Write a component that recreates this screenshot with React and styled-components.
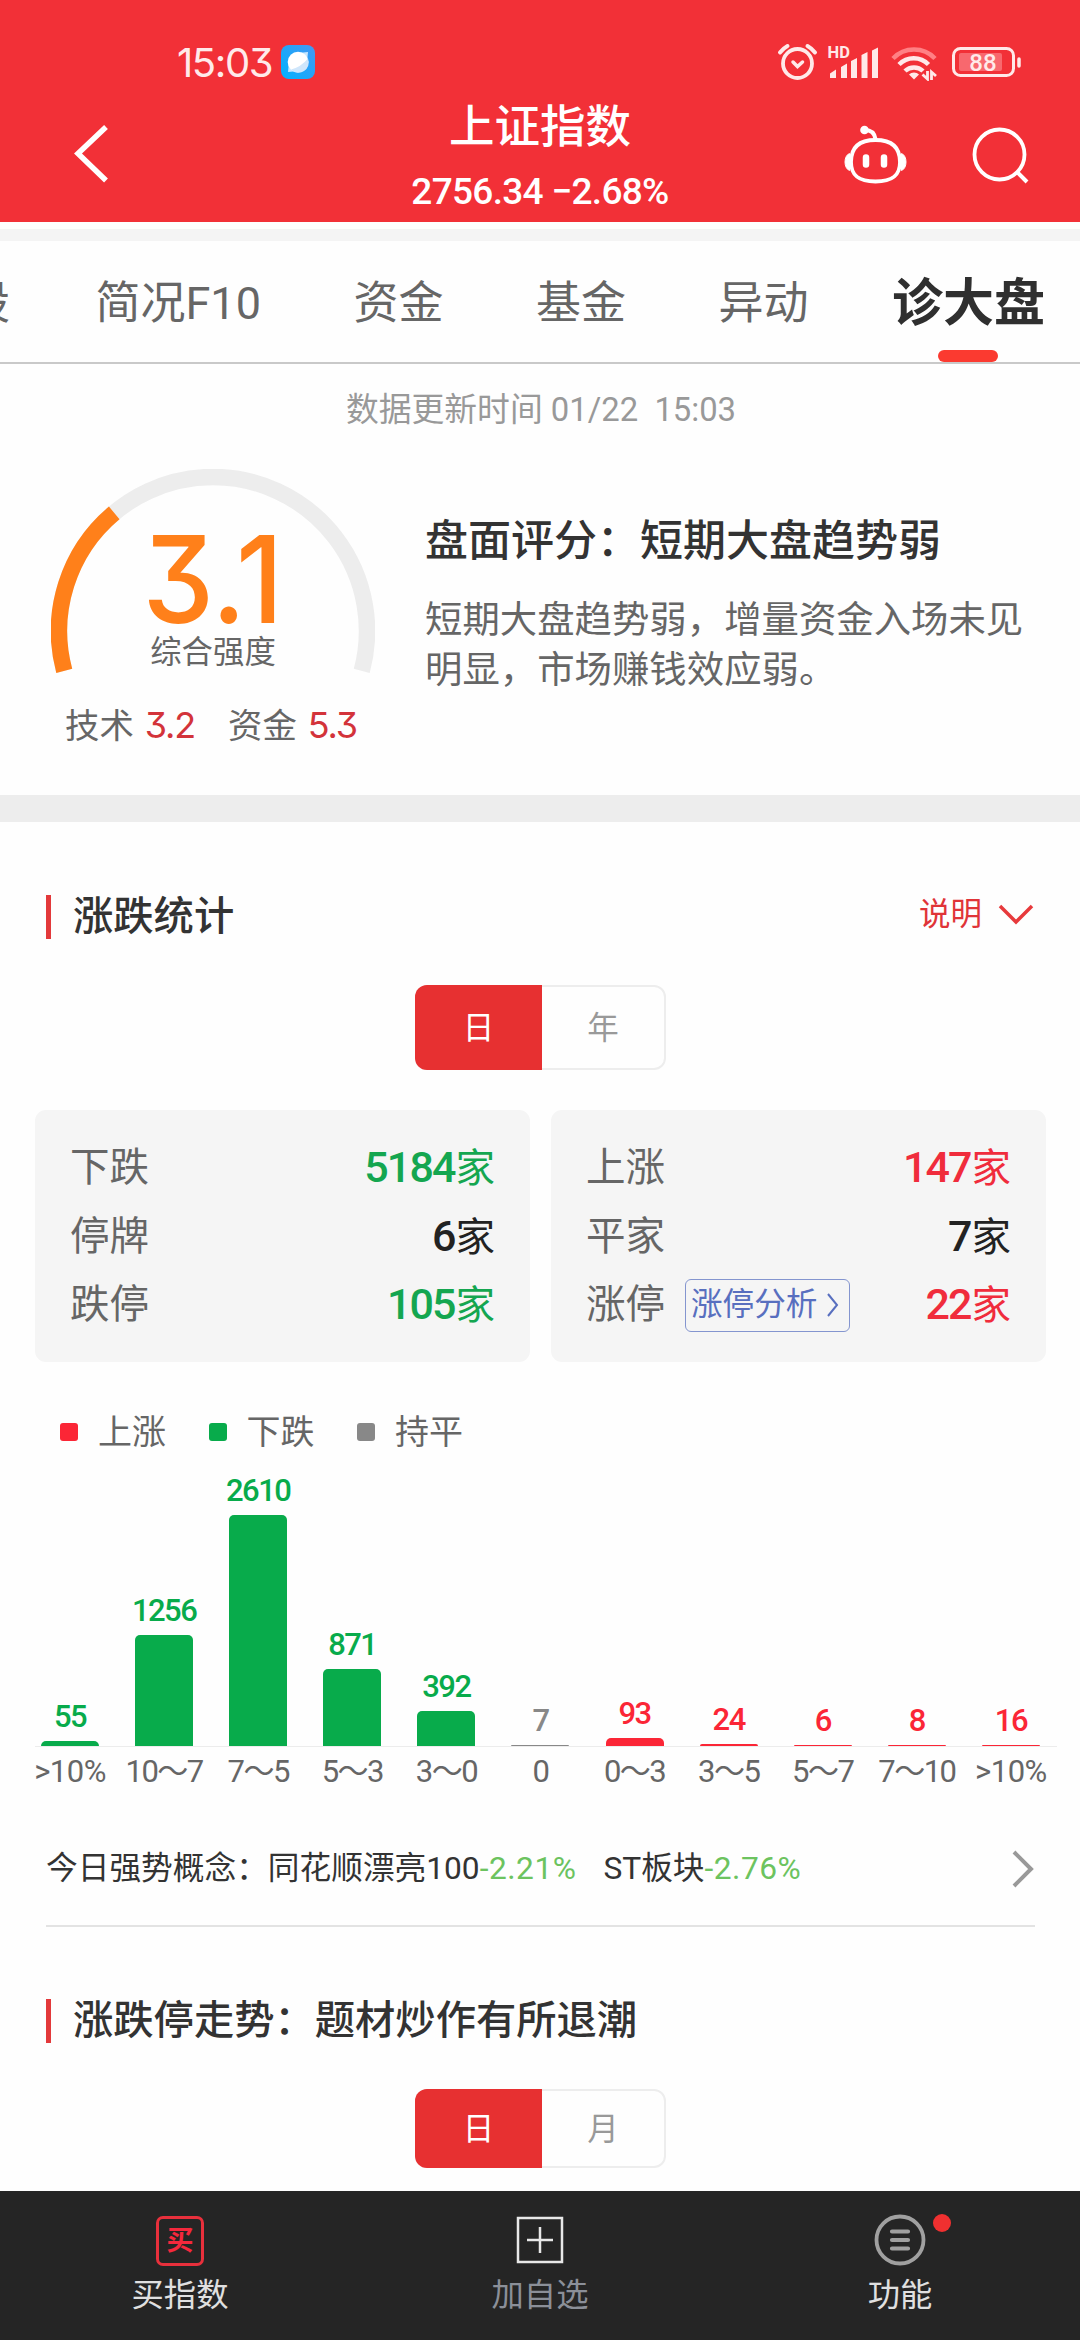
import React from "react";
import styled, { createGlobalStyle } from "styled-components";

const GlobalStyle = createGlobalStyle`
  * {
    box-sizing: border-box;
  }
  body {
    margin: 0;
    background: #fefefe;
    font-family: Roboto, "Noto Sans CJK SC", sans-serif;
    color: #333;
  }
`;

const Page = styled.div`
  width: 1080px;
  height: 2340px;
  display: flex;
  flex-direction: column;
  overflow: hidden;
  white-space: nowrap;
`;

/* ---------- header ---------- */

const Header = styled.header`
  height: 222px;
  flex: none;
  background: #f23037;
  color: #fff;
`;

const StatusBar = styled.div`
  height: 90px;
  padding: 34px 59px 0 177px;
  display: flex;
  justify-content: space-between;
`;

const StatusGroup = styled.div`
  height: 56px;
  display: flex;
  align-items: center;
`;

const Clock = styled.span`
  width: 104px;
  font-family: Inter, sans-serif;
  font-feature-settings: "cv09";
  font-size: 40px;
  line-height: 57px;
  letter-spacing: -1.4px;
  color: #ffeaea;
`;

const NavBar = styled.div`
  height: 132px;
  display: grid;
  grid-template-columns: 400px 280px 400px;
`;

const BackButton = styled.div`
  padding: 32px 0 0 72px;
`;

const Heading = styled.div`
  display: flex;
  flex-direction: column;
  align-items: center;
`;

const Title = styled.h1`
  margin: 10px 0 0;
  font-size: 45.5px;
  line-height: 55px;
  font-weight: 500;
`;

const Quote = styled.div`
  margin-top: 17px;
  font-size: 37px;
  line-height: 40px;
  font-weight: 500;
  letter-spacing: -0.7px;
`;

const NavActions = styled.div`
  display: flex;
  justify-content: flex-end;
  align-items: flex-start;
  padding: 33px 49px 0 0;
  gap: 62px;
`;

/* ---------- tabs ---------- */

const Strip = styled.div`
  height: 12px;
  margin-top: 7px;
  flex: none;
  background: #f4f4f4;
`;

const Tabs = styled.nav`
  height: 123px;
  flex: none;
  display: flex;
  justify-content: flex-end;
  gap: 92.5px;
  padding-right: 35px;
  border-bottom: 2px solid #c9c9c9;
`;

const Tab = styled.div`
  flex: none;
  height: 121px;
  margin-left: ${p => (p.$active ? -9 : 0)}px;
  display: flex;
  flex-direction: column;
  align-items: center;
  justify-content: space-between;
  font-size: ${p => (p.$active ? 51 : 45)}px;
  font-weight: ${p => (p.$active ? 700 : 400)};
  line-height: 126px;
  color: ${p => (p.$active ? "#2f2f2f" : "#666")};

  &:first-child {
    margin-right: -7px;
  }
`;

const Underline = styled.i`
  width: 60px;
  height: 12px;
  flex: none;
  margin-top: -17px;
  border-radius: 6px;
  background: #fb3a30;
`;

/* ---------- score ---------- */

const Updated = styled.div`
  height: 92px;
  flex: none;
  padding-left: 2px;
  text-align: center;
  font-size: 32.8px;
  line-height: 93px;
  white-space: pre;
  color: #999;
`;

const Score = styled.section`
  height: 339px;
  flex: none;
  display: flex;
`;

const ScoreLeft = styled.div`
  width: 425px;
  padding-top: 13px;
`;

const GaugeBox = styled.div`
  position: relative;
  width: 324px;
  height: 207px;
  margin-left: 51px;
`;

const GaugeText = styled.div`
  position: absolute;
  inset: 55px 0 0;
  display: flex;
  flex-direction: column;
  align-items: center;
`;

const GaugeValue = styled.div`
  height: 110px;
  font-family: Inter, sans-serif;
  font-feature-settings: "cv09";
  font-size: 121px;
  line-height: 110px;
  font-weight: 500;
  color: #ff801a;
  transform: scaleX(0.94);
`;

const GaugeLabel = styled.div`
  font-size: 31.4px;
  line-height: 38px;
  color: #666;
`;

const SubScores = styled.div`
  display: flex;
  margin-top: 30px;
  padding-left: 65px;
  font-size: 34.4px;
  line-height: 40px;
  color: #666;
`;

const SubScore = styled.div`
  width: 163px;
  display: flex;
  gap: 11px;

  b {
    font-family: Inter, sans-serif;
    font-feature-settings: "cv09";
    font-weight: 400;
    font-size: 36px;
    line-height: 39px;
    letter-spacing: -1.2px;
    color: #d3333a;
  }
`;

const ScoreRight = styled.div`
  padding-top: 57px;
`;

const Verdict = styled.h2`
  margin: 0;
  font-size: 43px;
  line-height: 56px;
  font-weight: 500;
`;

const Summary = styled.p`
  width: 604px;
  margin: 26px 0 0;
  white-space: normal;
  font-size: 37.4px;
  line-height: 50px;
  color: #666;
`;

const Divider = styled.div`
  height: 27px;
  flex: none;
  background: #ededed;
`;

/* ---------- sections ---------- */

const SectionHead = styled.div`
  height: 44px;
  flex: none;
  margin: ${p => p.$top}px 46px 0;
  padding-left: 22px;
  display: flex;
  align-items: center;
  justify-content: space-between;
  border-left: 5px solid #e3393b;
`;

const SectionTitle = styled.h2`
  margin: 0;
  font-size: 40.3px;
  line-height: 44px;
  font-weight: 500;
`;

const Explain = styled.div`
  display: flex;
  align-items: center;
  gap: 16px;
  margin-top: -4px;
  font-size: 31.5px;
  line-height: 44px;
  color: #e03438;
`;

const Switcher = styled.div`
  width: 251px;
  height: ${p => p.$height}px;
  flex: none;
  margin: 46px 0 0 415px;
  display: flex;
  border: 2px solid #ededed;
  border-radius: 12px;
`;

const SwitchItem = styled.div`
  flex: 1;
  display: flex;
  align-items: center;
  justify-content: center;
  padding-bottom: 5px;
  font-size: 31.5px;
  color: #999;

  ${p =>
    p.$active &&
    `
    flex: none;
    width: 127px;
    margin: -2px 0 -2px -2px;
    border-radius: 12px 0 0 12px;
    background: #e73031;
    color: #fff;
  `}
`;

const Cards = styled.div`
  margin: 40px 34px 0 35px;
  height: 252px;
  flex: none;
  display: grid;
  grid-template-columns: 1fr 1fr;
  gap: 21px;
`;

const Card = styled.div`
  padding: 24px 35px 22px;
  border-radius: 11px;
  background: #f5f5f5;
`;

const CardRow = styled.div`
  height: 68.5px;
  display: flex;
  align-items: center;
  font-size: 39.5px;
  line-height: 68px;
  color: #666;
`;

const Count = styled.span`
  margin-left: auto;
  color: ${p => p.$color};

  b {
    font-size: 43px;
    font-weight: 500;
    letter-spacing: -1.9px;
    margin-right: 1px;
  }
`;

const LinkButton = styled.div`
  height: 53px;
  width: 165px;
  margin-left: 20px;
  padding-left: 5px;
  display: flex;
  align-items: center;
  gap: 10px;
  border: 1.5px solid #8495cf;
  border-radius: 6px;
  font-size: 31.6px;
  line-height: 50px;
  color: #586fbf;
`;

const Legend = styled.div`
  height: 40px;
  flex: none;
  margin: 50px 0 0 60px;
  display: flex;
`;

const LegendItem = styled.div`
  width: 148.5px;
  display: flex;
  align-items: center;
  gap: 20px;
  font-size: 34px;
  line-height: 40px;
  color: #666;

  &::before {
    content: "";
    width: 18px;
    height: 18px;
    border-radius: 3px;
    background: ${p => p.$color};
  }
`;

/* ---------- chart ---------- */

const Chart = styled.div`
  height: 340px;
  flex: none;
  margin: 0 22px 0 23px;
  display: grid;
  grid-template-columns: repeat(11, 1fr);
  background: linear-gradient(#ececec, #ececec) 12px 294px / 1022px 1px no-repeat;
`;

const Column = styled.div`
  display: flex;
  flex-direction: column;
  align-items: center;
  justify-content: flex-end;
  font-size: 31px;
`;

const BarValue = styled.div`
  height: 30px;
  margin-bottom: 9px;
  line-height: 30px;
  font-weight: 500;
  letter-spacing: -1.5px;
  color: ${p => p.$color};
`;

const Bar = styled.div`
  width: 58px;
  border-radius: 5px 5px 0 0;
  background: ${p => p.$color};
`;

const Range = styled.div`
  height: 46px;
  line-height: 51px;
  letter-spacing: ${p => (p.$edge ? -0.5 : -1.5)}px;
  color: #666;
`;

/* ---------- concepts ---------- */

const Concepts = styled.div`
  height: 115px;
  flex: none;
  margin: 20px 45px 0 46px;
  display: flex;
  align-items: center;
  justify-content: space-between;
  border-bottom: 2px solid #e3e3e3;
  font-size: 31.7px;
  line-height: 40px;
  color: #333;
`;

const ConceptText = styled.div`
  margin-top: 0;
`;

const Change = styled.span`
  margin-right: 27px;
  letter-spacing: 0.5px;
  color: #6cc35f;
`;

/* ---------- bottom bar ---------- */

const BottomBar = styled.footer`
  height: 149px;
  flex: none;
  margin-top: auto;
  display: grid;
  grid-template-columns: repeat(3, 1fr);
  background: #252525;
`;

const BottomItem = styled.div`
  display: flex;
  flex-direction: column;
  align-items: center;
  padding-top: 23px;
  font-size: 32.3px;
  line-height: 40px;
  color: ${p => p.$color};

  svg {
    overflow: visible;
    margin-bottom: 10px;
  }
`;

const BuyIcon = styled.span`
  width: 48px;
  height: 50px;
  margin: 2px 0 9px;
  border: 3px solid #e8303c;
  border-radius: 7px;
  text-align: center;
  font-size: 27px;
  line-height: 44px;
  font-weight: 700;
  color: #f5283c;
`;

const green = "#08ab4b";
const red = "#fb2636";
const grey = "#888";

const tabs = ["个股", "简况F10", "资金", "基金", "异动"];

const columns = [
  { value: 55, height: 5, range: ">10%", color: green },
  { value: 1256, height: 111, range: "10～7", color: green },
  { value: 2610, height: 231, range: "7～5", color: green },
  { value: 871, height: 77, range: "5～3", color: green },
  { value: 392, height: 35, range: "3～0", color: green },
  { value: 7, height: 1.5, range: "0", color: grey },
  { value: 93, height: 8, range: "0～3", color: red },
  { value: 24, height: 2, range: "3～5", color: red },
  { value: 6, height: 1.5, range: "5～7", color: red },
  { value: 8, height: 1.5, range: "7～10", color: red },
  { value: 16, height: 1.5, range: ">10%", color: red },
];

const AppBadge = () => (
  <svg width="34" height="34" viewBox="0 0 34 34">
    <defs>
      <linearGradient id="badge" x1="1" y1="0" x2="0" y2="1">
        <stop offset="0" stopColor="#4597f2" />
        <stop offset="1" stopColor="#00b2ff" />
      </linearGradient>
    </defs>
    <rect width="34" height="34" rx="8" fill="url(#badge)" />
    <path d="M7 27l1-10 10 9zM27 7l-10 1 9 9z" fill="#c9e8ff" />
    <circle cx="17" cy="17" r="10.3" fill="#fff" />
    <path d="M27 13.5A10.3 10.3 0 0 1 10 24.5Q20 22 27 13.5z" fill="#cfe6fb" />
  </svg>
);

const StatusIcons = () => (
  <svg width="244" height="38" viewBox="777 43 244 38" fill="none" stroke="#ffe9e9">
    <circle cx="797.5" cy="63.5" r="14.5" strokeWidth="3.8" />
    <path d="M793 62l4.500 4.500 5-4.500" strokeWidth="3.5" strokeLinecap="round" />
    <path d="M780 52.500q3-4 7.500-6.500M815 52.500q-3-4-7.500-6.500" strokeWidth="4" strokeLinecap="round" />
    <text
      x="827.5"
      y="58.3"
      fontSize="16.5"
      fontWeight="700"
      fontFamily="Roboto"
      fill="#ffe9e9"
      stroke="none"
    >
      HD
    </text>
    <path
      d="M830 78v-4.500l6-4V78zM841 78V67l6-3.500V78zM851 78V61l6-3V78zM861.500 78V55l6-3V78zM872 78V50.500l6-3V78z"
      fill="#ffe9e9"
      stroke="none"
    />
    <path d="M893 58.500a29 29 0 0 1 42 0" strokeWidth="4.5" stroke="#ff8084" />
    <path d="M899 64.500a20.500 20.500 0 0 1 29.500 0" strokeWidth="4.5" />
    <path d="M905 71a13 13 0 0 1 18 0" strokeWidth="4.5" />
    <path d="M909 74.500a7 7 0 0 1 10 0l-5 5z" fill="#ffe9e9" stroke="none" />
    <path d="M927.500 71v8l-5-4.500M931.500 80v-8l4.500 4" strokeWidth="2.8" />
    <rect x="953.5" y="48.5" width="60" height="27" rx="7" strokeWidth="3" />
    <rect x="959" y="53" width="43" height="18" rx="2" fill="#f8686e" stroke="none" />
    <path d="M1019 59v7" strokeWidth="3.5" strokeLinecap="round" />
    <text
      x="983"
      y="70.5"
      fontSize="24"
      fontWeight="500"
      fontFamily="Roboto"
      textAnchor="middle"
      fill="#ffeaea"
      stroke="none"
    >
      88
    </text>
  </svg>
);

const RobotIcon = () => (
  <svg width="68" height="62" viewBox="841 123 68 62" fill="none" stroke="#fff">
    <path
      d="M875.500 140C891 140 900 147 900 162C900 176 892 181.500 875.500 181.500C859 181.500 851 176 851 162C851 147 860 140 875.500 140z"
      strokeWidth="3.8"
    />
    <path d="M849.500 153.500c-6 2-6 15 0 17zM901.500 153.500c6 2 6 15 0 17z" fill="#fff" strokeWidth="1" />
    <path d="M866 157.500v7M884 157.500v7" strokeWidth="6.5" strokeLinecap="round" />
    <path d="M865 130q9 0 10.500 9" strokeWidth="4" />
    <circle cx="864.5" cy="130" r="4.3" fill="#fff" stroke="none" />
  </svg>
);

const SearchIcon = () => (
  <svg width="60" height="62" viewBox="971 123 60 62" fill="none" stroke="#fff">
    <circle cx="999.5" cy="154.5" r="25" strokeWidth="3.8" />
    <path d="M1017 172l10 10" strokeWidth="4" />
  </svg>
);

// semicircle plus 15 degrees on either side, filled up to score / 10
const Gauge = ({ score }) => {
  const point = deg => {
    const a = (deg * Math.PI) / 180;
    return `${162 - 154 * Math.cos(a)} ${162 - 154 * Math.sin(a)}`;
  };
  const stop = -15 + 21 * score;
  return (
    <svg width="324" height="207" viewBox="0 0 324 207" fill="none" strokeWidth="16.5">
      <path d={`M${point(-15)}A154 154 0 1 1 ${point(195)}`} stroke="#ededed" />
      <path d={`M${point(-15)}A154 154 0 0 1 ${point(stop)}`} stroke="#ff801a" />
    </svg>
  );
};

const Switch = ({ items, height }) => (
  <Switcher $height={height}>
    {items.map((item, i) => (
      <SwitchItem key={item} $active={i === 0}>
        {item}
      </SwitchItem>
    ))}
  </Switcher>
);

const Stat = ({ label, count, color, children }) => (
  <CardRow>
    {label}
    {children}
    <Count $color={color}>
      <b>{count}</b>家
    </Count>
  </CardRow>
);

export default () => (
  <Page>
    <GlobalStyle />
    <Header>
      <StatusBar>
        <StatusGroup>
          <Clock>15:03</Clock>
          <AppBadge />
        </StatusGroup>
        <StatusGroup>
          <StatusIcons />
        </StatusGroup>
      </StatusBar>
      <NavBar>
        <BackButton>
          <svg width="40" height="62" viewBox="72 122 40 62" fill="none" stroke="#fff">
            <path d="M106 127L78 153.500l28 27" strokeWidth="5.5" />
          </svg>
        </BackButton>
        <Heading>
          <Title>上证指数</Title>
          <Quote>2756.34 −2.68%</Quote>
        </Heading>
        <NavActions>
          <RobotIcon />
          <SearchIcon />
        </NavActions>
      </NavBar>
    </Header>

    <Strip />
    <Tabs>
      {tabs.map(tab => (
        <Tab key={tab}>{tab}</Tab>
      ))}
      <Tab $active>
        诊大盘
        <Underline />
      </Tab>
    </Tabs>

    <Updated>{"数据更新时间 01/22  15:03"}</Updated>
    <Score>
      <ScoreLeft>
        <GaugeBox>
          <Gauge score={3.1} />
          <GaugeText>
            <GaugeValue>3.1</GaugeValue>
            <GaugeLabel>综合强度</GaugeLabel>
          </GaugeText>
        </GaugeBox>
        <SubScores>
          <SubScore>
            技术<b>3.2</b>
          </SubScore>
          <SubScore>
            资金<b>5.3</b>
          </SubScore>
        </SubScores>
      </ScoreLeft>
      <ScoreRight>
        <Verdict>盘面评分：短期大盘趋势弱</Verdict>
        <Summary>短期大盘趋势弱，增量资金入场未见明显，市场赚钱效应弱。</Summary>
      </ScoreRight>
    </Score>
    <Divider />

    <SectionHead $top={73}>
      <SectionTitle>涨跌统计</SectionTitle>
      <Explain>
        说明
        <svg width="36" height="24" viewBox="0 0 36 24" fill="none" stroke="#e73a3c">
          <path d="M2 3l16 16L34 3" strokeWidth="3.5" />
        </svg>
      </Explain>
    </SectionHead>
    <Switch items={["日", "年"]} height={85} />

    <Cards>
      <Card>
        <Stat label="下跌" count={5184} color="#14a650" />
        <Stat label="停牌" count={6} color="#222" />
        <Stat label="跌停" count={105} color="#14a650" />
      </Card>
      <Card>
        <Stat label="上涨" count={147} color="#f02c3c" />
        <Stat label="平家" count={7} color="#222" />
        <Stat label="涨停" count={22} color="#f02c3c">
          <LinkButton>
            涨停分析
            <svg width="12" height="24" viewBox="0 0 12 24" fill="none" stroke="#586fbf">
              <path d="M1 1l9 11-9 11" strokeWidth="2" />
            </svg>
          </LinkButton>
        </Stat>
      </Card>
    </Cards>

    <Legend>
      <LegendItem $color={red}>上涨</LegendItem>
      <LegendItem $color={green}>下跌</LegendItem>
      <LegendItem $color={grey}>持平</LegendItem>
    </Legend>

    <Chart>
      {columns.map((col, i) => (
        <Column key={i}>
          <BarValue $color={col.color}>{col.value}</BarValue>
          <Bar $color={col.color} style={{ height: col.height }} />
          <Range $edge={col.range === ">10%"}>{col.range}</Range>
        </Column>
      ))}
    </Chart>

    <Concepts>
      <ConceptText>
        今日强势概念：同花顺漂亮100<Change>-2.21%</Change>
        ST板块<Change>-2.76%</Change>
      </ConceptText>
      <svg width="24" height="38" viewBox="0 0 24 38" fill="none" stroke="#999">
        <path d="M3 2l17 17L3 36" strokeWidth="4" />
      </svg>
    </Concepts>

    <SectionHead $top={72}>
      <SectionTitle>涨跌停走势：题材炒作有所退潮</SectionTitle>
    </SectionHead>
    <Switch items={["日", "月"]} height={79} />

    <BottomBar>
      <BottomItem $color="#e0e0e0">
        <BuyIcon>买</BuyIcon>
        买指数
      </BottomItem>
      <BottomItem $color="#8b8f98">
        <svg width="52" height="51" viewBox="514 2215 52 51" fill="none" stroke="#e8e8e8">
          <rect x="518" y="2219" width="44" height="44" strokeWidth="2.5" />
          <path d="M527 2241h26M540 2228v26" strokeWidth="2.5" />
        </svg>
        加自选
      </BottomItem>
      <BottomItem $color="#e0e0e0">
        <svg width="52" height="51" viewBox="874 2215 52 51" fill="none" stroke="#a0a0a0">
          <circle cx="900" cy="2241" r="23.5" strokeWidth="3.8" />
          <path d="M892 2232.500h16M892 2241h16M892 2249.500h16" strokeWidth="4.2" strokeLinecap="round" />
          <circle cx="942" cy="2224" r="9" fill="#f03030" stroke="none" />
        </svg>
        功能
      </BottomItem>
    </BottomBar>
  </Page>
);
